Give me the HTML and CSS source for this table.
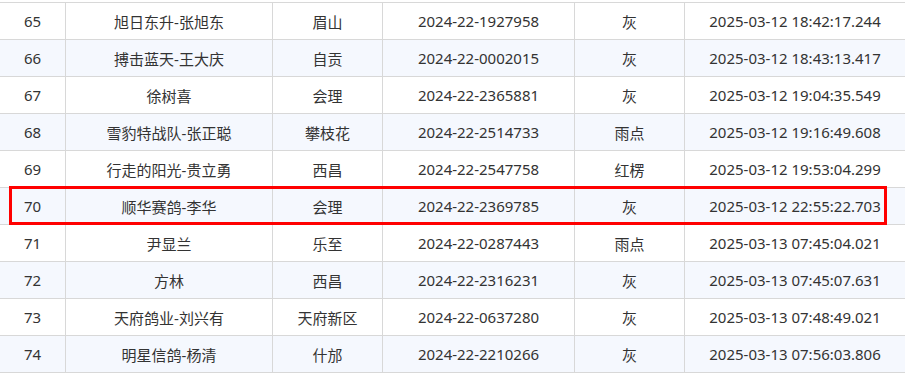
FILE: index.html
```html
<!DOCTYPE html>
<html lang="zh">
<head>
<meta charset="utf-8">
<link rel="stylesheet" href="styles.css">
</head>
<body>
<div class="table">
  <div class="row"><div class="c">65</div><div class="c">旭日东升-张旭东</div><div class="c">眉山</div><div class="c">2024-22-1927958</div><div class="c">灰</div><div class="c">2025-03-12 18:42:17.244</div></div>
  <div class="row alt"><div class="c">66</div><div class="c">搏击蓝天-王大庆</div><div class="c">自贡</div><div class="c">2024-22-0002015</div><div class="c">灰</div><div class="c">2025-03-12 18:43:13.417</div></div>
  <div class="row"><div class="c">67</div><div class="c">徐树喜</div><div class="c">会理</div><div class="c">2024-22-2365881</div><div class="c">灰</div><div class="c">2025-03-12 19:04:35.549</div></div>
  <div class="row alt"><div class="c">68</div><div class="c">雪豹特战队-张正聪</div><div class="c">攀枝花</div><div class="c">2024-22-2514733</div><div class="c">雨点</div><div class="c">2025-03-12 19:16:49.608</div></div>
  <div class="row"><div class="c">69</div><div class="c">行走的阳光-贵立勇</div><div class="c">西昌</div><div class="c">2024-22-2547758</div><div class="c">红楞</div><div class="c">2025-03-12 19:53:04.299</div></div>
  <div class="row alt"><div class="c">70</div><div class="c">顺华赛鸽-李华</div><div class="c">会理</div><div class="c">2024-22-2369785</div><div class="c">灰</div><div class="c">2025-03-12 22:55:22.703</div></div>
  <div class="row"><div class="c">71</div><div class="c">尹显兰</div><div class="c">乐至</div><div class="c">2024-22-0287443</div><div class="c">雨点</div><div class="c">2025-03-13 07:45:04.021</div></div>
  <div class="row alt"><div class="c">72</div><div class="c">方林</div><div class="c">西昌</div><div class="c">2024-22-2316231</div><div class="c">灰</div><div class="c">2025-03-13 07:45:07.631</div></div>
  <div class="row"><div class="c">73</div><div class="c">天府鸽业-刘兴有</div><div class="c">天府新区</div><div class="c">2024-22-0637280</div><div class="c">灰</div><div class="c">2025-03-13 07:48:49.021</div></div>
  <div class="row alt"><div class="c">74</div><div class="c">明星信鸽-杨清</div><div class="c">什邡</div><div class="c">2024-22-2210266</div><div class="c">灰</div><div class="c">2025-03-13 07:56:03.806</div></div>
</div>
<div class="highlight"></div>
</body>
</html>
```

FILE: styles.css
```css
html, body {
  margin: 0;
  padding: 0;
  background: #ffffff;
}
body {
  font-family: "Noto Sans", "Noto Sans CJK SC", sans-serif;
  font-size: 15px;
  color: #333333;
  padding-top: 2px;
  overflow: hidden;
}
.table {
  width: 905px;
  border-top: 1px solid #d8d8d8;
}
.row {
  display: grid;
  grid-template-columns: 66px 207px 110px 192px 110px 1fr;
  height: 37px;
  box-sizing: border-box;
  border-bottom: 1px solid #d8d8d8;
  background: #ffffff;
}
.row.alt {
  background: #f5f8fe;
}
.c {
  display: flex;
  align-items: center;
  justify-content: center;
  box-sizing: border-box;
  border-right: 1px solid #d8d8d8;
  white-space: nowrap;
}
.c:last-child {
  border-right: none;
}
.highlight {
  position: absolute;
  left: 9px;
  top: 186px;
  width: 878px;
  height: 39px;
  box-sizing: border-box;
  border: 3px solid #ff0000;
}
```
